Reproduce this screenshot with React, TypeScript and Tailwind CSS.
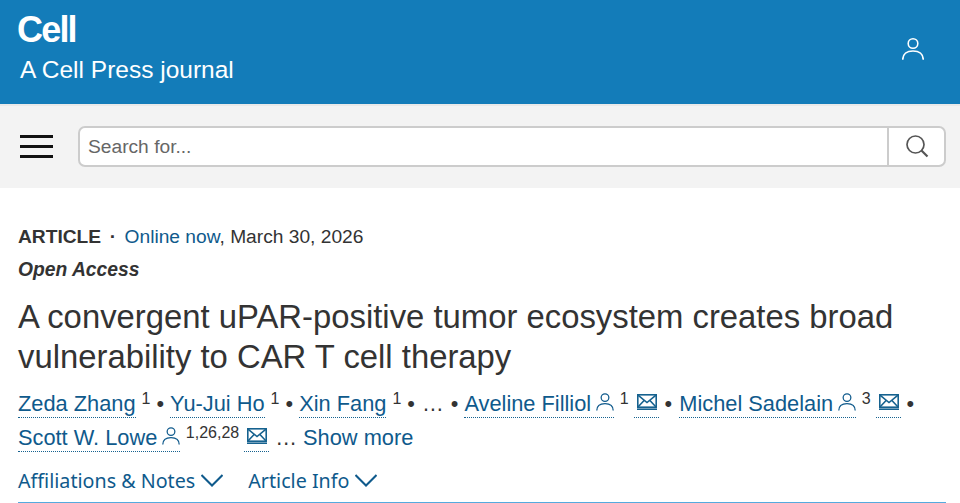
import React from "react";

const User = ({ className }: { className: string }) => (
  <svg viewBox="1.500 2 21 21.500" fill="none" stroke="currentColor" strokeWidth="1.500" className={className}>
    <circle cx="12" cy="7.500" r="4.600" />
    <path d="M2.200 23c0-5.500 4-8.400 9.800-8.400s9.800 2.900 9.800 8.400" />
  </svg>
);

const Mail = () => (
  <a className="inline-block w-[25px] h-[26px] align-[-7px] ml-[5px] mr-[6px] border-b border-dotted border-[#16628f] text-[#16628f]">
    <svg viewBox="0 0 20 16" fill="none" stroke="currentColor" strokeWidth="1.600" className="w-[20px] h-[16px] ml-[3px] mt-[2px]">
      <rect x="0.800" y="0.800" width="18.400" height="12.400" />
      <path d="M1 1.200 10 8.500 19 1.200M1 13 7.300 6.300M19 13 12.700 6.300" />
      <path d="M0 15.200H20" strokeWidth="1.600" />
    </svg>
  </a>
);

const Author = ({ name, icon }: { name: string; icon?: boolean }) => (
  <a className="text-[#0f5a8c] border-b border-dotted border-[#16628f] pb-[1px]">
    {name}
    {icon && <User className="inline-block w-[18px] h-[18px] ml-[4.500px] align-[0px]" />}
  </a>
);

const Sup = ({ children }: { children: React.ReactNode }) => (
  <span className="text-[16px] leading-none text-[#333333] ml-[6px] align-[7px]">{children}</span>
);

const Dot = () => <span className="mx-[6px] text-[#333333]">•</span>;

const Chevron = () => (
  <svg viewBox="1 1 22 12" fill="none" stroke="currentColor" strokeWidth="2" className="w-[22px] h-[13px]">
    <path d="M1.500 1.500 12 12 22.500 1.500" />
  </svg>
);

export default function App() {
  return (
    <div className="w-[960px] h-[503px] overflow-hidden bg-white font-['Liberation_Sans',sans-serif]">
      <header className="h-[104px] bg-[#137cb9] flex items-start justify-between pl-[17px] pr-[36px] text-white">
        <div>
          <div className="text-[36px] font-bold leading-[36px] tracking-[-1.800px] mt-[12px]">Cell</div>
          <div className="text-[24.500px] leading-[30px] mt-[7px] ml-[3px]">A Cell Press journal</div>
        </div>
        <User className="w-[22px] h-[24px] mt-[37px]" />
      </header>
      <div className="h-[84px] bg-[#f3f3f3] border-t-2 border-[#e9e9e9] flex items-center pl-[20px] pr-[14px]">
        <div className="w-[33px] flex flex-col gap-[7px] shrink-0 mb-[2px]">
          <div className="h-[3px] bg-[#111111]" />
          <div className="h-[3px] bg-[#111111]" />
          <div className="h-[3px] bg-[#111111]" />
        </div>
        <div className="ml-[25px] flex-1 h-[41px] mb-[2px] bg-white border-2 border-[#cccccc] rounded-[7px] flex items-center">
          <span className="flex-1 pl-[8px] pt-[2px] text-[19.200px] text-[#666666]">Search for...</span>
          <div className="w-[57px] h-full border-l-2 border-[#cccccc] flex items-center justify-center text-[#555555]">
            <svg viewBox="0 0 24 24" fill="none" stroke="currentColor" strokeWidth="1.700" className="w-[24px] h-[24px]">
              <circle cx="10.500" cy="10.500" r="8.500" />
              <path d="M16.500 16.500 22.500 22.500" strokeWidth="2.200" />
            </svg>
          </div>
        </div>
      </div>
      <main className="pl-[18px] pr-[14px] pt-[37px]">
        <div className="text-[19.200px] leading-[24px] text-[#333333]">
          <b>ARTICLE</b>
          <span className="mx-[8.500px] font-bold">·</span>
          <a className="text-[#0f5a8c]">Online now</a>, March 30, 2026
        </div>
        <div className="text-[19.300px] leading-[24px] mt-[9px] font-bold italic text-[#333333]">Open Access</div>
        <h1 className="text-[32.850px] leading-[40px] font-normal text-[#333333] mt-[15px]">
          A convergent uPAR-positive tumor ecosystem creates broad vulnerability to CAR T cell therapy
        </h1>
        <div className="text-[21.800px] leading-[34px] text-[#333333] mt-[10px] whitespace-nowrap">
          <div>
            <Author name="Zeda Zhang" /><Sup>1</Sup><Dot />
            <Author name="Yu-Jui Ho" /><Sup>1</Sup><Dot />
            <Author name="Xin Fang" /><Sup>1</Sup><Dot /><span className="mx-[1px]">…</span><Dot />
            <Author name="Aveline Filliol" icon /><Sup>1</Sup><Mail />•<span className="mx-[3.500px]" />
            <Author name="Michel Sadelain" icon /><Sup>3</Sup><Mail />•
          </div>
          <div>
            <Author name="Scott W. Lowe" icon /><Sup>1,26,28</Sup><Mail />… <a className="text-[#0f5a8c]">Show more</a>
          </div>
        </div>
        <div className="flex items-center gap-[25px] h-[45px] mt-[4px] text-[#0f5a8c] text-[19.700px] font-['Noto_Sans',sans-serif] border-b-2 border-[#55aade]">
          <div className="flex items-center gap-[6px]">Affiliations &amp; Notes <Chevron /></div>
          <div className="flex items-center gap-[6px]">Article Info <Chevron /></div>
        </div>
      </main>
    </div>
  );
}
